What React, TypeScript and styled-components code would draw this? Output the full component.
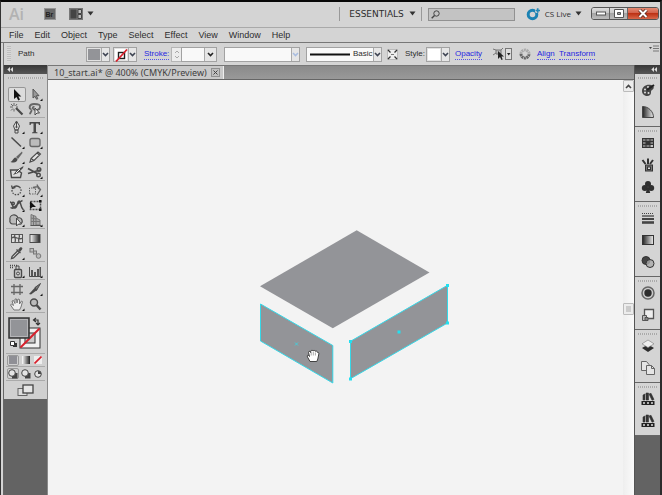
import React from "react";
import styled, { createGlobalStyle } from "styled-components";

const Global = createGlobalStyle`
  * { box-sizing: border-box; }
  body { margin: 0; background: #d4d4d4; }
  button, input, select { font: inherit; color: inherit; margin: 0; padding: 0; }
  svg { display: block; flex: none; }
`;

const Frame = styled.div`
  min-height: 100vh;
  display: flex;
  flex-direction: column;
  overflow: hidden;
  background: #d4d4d4;
  border-top: 2px solid #080808;
  border-left: 1px solid #333;
  border-right: 2px solid #2c2c2c;
  color: #2d2d2d;
  font: 9px/12px "DejaVu Sans", Verdana, sans-serif;
`;

const TitleBar = styled.header`
  display: flex;
  align-items: center;
  height: 26px;
  padding: 0 1px 2px 8px;
  border-bottom: 1px solid #a9a9a9;
`;
const Brand = styled.span`
  width: 35px;
  color: #b2b2b2;
  font: 600 16px/20px "Open Sans", sans-serif;
`;
const Spacer = styled.div`flex: 1;`;
const PlainButton = styled.button<{ $gap?: number }>`
  display: flex;
  align-items: center;
  gap: 4px;
  margin-right: ${(p) => p.$gap ?? 0}px;
  border: 0;
  background: none;
  white-space: nowrap;
`;
const Workspace = styled(PlainButton)`
  height: 14px;
  gap: 5px;
  padding: 0 5px 0 9px;
  border-left: 1px solid #999;
  border-right: 1px solid #999;
  font: 9px/12px "DejaVu Sans", sans-serif;
`;
const SearchBox = styled.label`
  display: flex;
  align-items: center;
  width: 87px;
  height: 13px;
  margin: 2px 11px 0 6px;
  padding-left: 2px;
  border: 1px solid #919191;
  background: #c3c3c3;
`;
const SearchInput = styled.input`
  flex: 1;
  min-width: 0;
  height: 10px;
  border: 0;
  outline: 0;
  background: none;
`;
const Live = styled(PlainButton)`
  font: 8px/12px "Open Sans", sans-serif;
`;
const WindowControls = styled.div`
  display: flex;
  height: 13px;
  border: 1px solid #555;
  border-radius: 3px;
  overflow: hidden;
`;
const WindowButton = styled.button<{ $close?: boolean }>`
  display: grid;
  place-items: center;
  width: ${(p) => (p.$close ? 30 : 18)}px;
  border: 0;
  border-right: ${(p) => (p.$close ? "0" : "1px solid #666")};
  background: ${(p) =>
    p.$close
      ? "linear-gradient(#e58b73, #d2604a 45%, #bd3215 50%, #d8674a)"
      : "linear-gradient(#dcdcdc, #c8c8c8 45%, #a5a5a5 50%, #bcbcbc)"};
`;

const MenuBar = styled.nav`
  display: flex;
  gap: 11px;
  height: 15px;
  padding-left: 8px;
  border-bottom: 1px solid #777;
  font: 9px/14px "Liberation Sans", Arial, sans-serif;
`;
const MenuItem = styled.button`
  border: 0;
  background: none;
  line-height: 13px;
`;

const ControlBar = styled.section`
  display: flex;
  align-items: center;
  height: 22px;
  margin-left: 2px;
  padding-left: 3px;
  border-left: 1px solid #777;
  font: 8px/10px "Liberation Sans", Arial, sans-serif;
`;
const Grip = styled.div`
  width: 4px;
  height: 16px;
  margin-right: 7px;
  background: repeating-linear-gradient(#bdbdbd 0 1px, #d8d8d8 1px 2px);
`;
const Caption = styled.span<{ $width: number }>`
  width: ${(p) => p.$width}px;
  white-space: nowrap;
`;
const PanelLink = styled.a<{ $width: number }>`
  display: flex;
  width: ${(p) => p.$width}px;
  color: #2626e0;
  text-decoration: none;
  white-space: nowrap;
  & > span { border-bottom: 1px dotted #5555e8; }
`;
const Picker = styled.button<{ $gap: number }>`
  display: flex;
  width: 24px;
  height: 15px;
  margin-right: ${(p) => p.$gap}px;
  border: 1px solid #a2a2a2;
  background: #fff;
`;
const Chevron = styled.span<{ $wide?: boolean }>`
  display: grid;
  place-items: center;
  align-self: stretch;
  flex: none;
  width: ${(p) => (p.$wide ? 12 : 8)}px;
  border-left: 1px solid #aaa;
  background: #e6e6e6;
  pointer-events: none;
`;
const Swatch = styled.span<{ $color: string }>`
  flex: 1;
  min-width: 0;
  align-self: stretch;
  display: grid;
  place-items: center;
  border: 1px solid #e2e2e2;
  background: ${(p) => p.$color};
`;
const Combo = styled.label<{ $width: number; $gap: number }>`
  display: grid;
  grid-template-columns: 1fr auto;
  width: ${(p) => p.$width}px;
  height: 15px;
  margin-right: ${(p) => p.$gap}px;
  border: 1px solid #a2a2a2;
  background: #f9f9f9;
  & > select { grid-area: 1 / 1 / 2 / 3; }
  & > span { grid-area: 1 / 2; }
  & > svg { grid-area: 1 / 1; align-self: center; margin-left: 3px; }
`;
const Select = styled.select<{ $indent?: number }>`
  appearance: none;
  min-width: 0;
  height: 13px;
  padding-left: ${(p) => p.$indent ?? 0}px;
  border: 0;
  background: none;
`;
const Stepper = styled.span`
  display: grid;
  place-items: center;
  width: 10px;
  height: 15px;
  border: 1px solid #b5b5b5;
  border-right: 0;
  background: #ececec;
`;
const OptionsButton = styled.button`
  align-self: flex-start;
  margin: 2px 1px 0 0;
  border: 0;
  background: none;
`;

const Body = styled.main`
  flex: 1;
  display: flex;
  margin-left: 2px;
  border-left: 1px solid #666;
`;
const SidePanel = styled.aside<{ $width: number }>`
  flex: none;
  width: ${(p) => p.$width}px;
  background: #636363;
`;
const PanelHeader = styled.button<{ $end?: boolean }>`
  display: flex;
  align-items: center;
  justify-content: ${(p) => (p.$end ? "flex-end" : "flex-start")};
  width: 100%;
  height: 9px;
  padding: 0 3px;
  border: 0;
  background: linear-gradient(#383838, #555);
`;
const ToolPanel = styled.div`
  padding: 3px 2px 3px;
  background: #d0d0d0;
`;
const Dots = styled.div`
  height: 2px;
  margin: 0 2px;
  background: repeating-linear-gradient(90deg, #aaa 0 1px, #d8d8d8 1px 2px);
`;
const ToolGroup = styled.div<{ $first?: boolean }>`
  display: grid;
  grid-template-columns: 18px 18px;
  justify-content: center;
  padding-top: 2px;
  margin-top: ${(p) => (p.$first ? 6 : 0)}px;
  border-bottom: 1px solid #aaa;
`;
const ToolButton = styled.button<{ $active?: boolean }>`
  width: 18px;
  height: 15px;
  border: 0;
  border-radius: 2px;
  box-shadow: ${(p) => (p.$active ? "inset 0 0 0 1px #969696" : "none")};
  background: ${(p) => (p.$active ? "#dcdcdc" : "none")};
`;
const ColorWell = styled.div`
  padding: 4px 2px 4px;
  border-bottom: 1px solid #aaa;
`;
const ModeRow = styled.div<{ $tall?: boolean }>`
  display: flex;
  justify-content: space-between;
  align-items: center;
  height: ${(p) => (p.$tall ? 14 : 13)}px;
  padding: 0 1px;
  border-bottom: 1px solid #aaa;
`;
const ModeButton = styled.button<{ $active?: boolean }>`
  display: grid;
  place-items: center;
  width: 12px;
  height: 11px;
  border: ${(p) => (p.$active ? "1px solid #999" : "0")};
  border-radius: 2px;
  background: none;
`;
const ScreenMode = styled.button`
  display: flex;
  justify-content: center;
  width: 100%;
  height: 15px;
  padding-top: 3px;
  border: 0;
  background: none;
`;

const Document = styled.section`
  flex: 1;
  min-width: 0;
  display: flex;
  flex-direction: column;
  border-left: 1px solid #8a8a8a;
`;
const TabStrip = styled.div`
  display: flex;
  height: 15px;
  background: linear-gradient(#8a8a8a, #999);
  border-top: 1px solid #777;
  border-bottom: 1px solid #666;
`;
const Tab = styled.div`
  display: flex;
  align-items: center;
  gap: 4px;
  padding: 0 3px 0 6px;
  background: #c9c9c9;
  border-right: 1px solid #eee;
  color: #404040;
  font: 9px/12px "Noto Sans", "Open Sans", sans-serif;
  white-space: nowrap;
`;
const CloseTab = styled.button`
  display: grid;
  place-items: center;
  width: 9px;
  height: 9px;
  border: 1px solid #909090;
  background: #c0c0c0;
`;
const Viewport = styled.div`
  flex: 1;
  display: flex;
`;
const Canvas = styled.div`
  position: relative;
  flex: 1;
  overflow: hidden;
  background: #f3f3f3;
`;
const Artwork = styled.svg`
  position: absolute;
  left: 208px;
  top: 146px;
`;
const ScrollTrack = styled.div`
  display: flex;
  flex-direction: column;
  align-items: center;
  width: 11px;
  background: linear-gradient(90deg, #eeeeee, #fafafa);
`;
const ScrollButton = styled.button`
  display: grid;
  place-items: center;
  width: 11px;
  height: 12px;
  border: 1px solid #bbb;
  border-radius: 1px;
  background: #ececec;
`;
const TrackSpan = styled.div<{ $share: number }>`flex: ${(p) => p.$share};`;

const DockGroup = styled.div`
  padding: 3px 1px 3px;
  border-bottom: 1px solid #666;
  background: #d4d4d4;
`;
const DockButton = styled.button`
  display: grid;
  place-items: center;
  width: 100%;
  height: 22px;
  border: 0;
  background: none;
`;
const Dock = styled(SidePanel)`
  border-left: 1px solid #555;
`;

const Caret = () => (
  <svg width="7" height="5" viewBox="0 0 7 5"><path d="M.5 .5h6L3.5 4.5z" fill="#333" /></svg>
);
const Vee = ({ color = "#3d4352" }: { color?: string }) => (
  <svg width="7" height="5" viewBox="0 0 7 5"><path d="M1 1l2.5 2.5L6 1" fill="none" stroke={color} strokeWidth="1.6" /></svg>
);
const Collapse = () => (
  <svg width="6" height="5" viewBox="0 0 6 5"><path d="M3 0L.3 2.5 3 5zM6 0L3.3 2.5 6 5z" fill="#ddd" /></svg>
);
const NoneSlash = () => (
  <svg width="13" height="13" viewBox="0 0 13 13">
    <rect x="3.5" y="3.5" width="6" height="6" fill="none" stroke="#222" strokeWidth="1.4" />
    <path d="M1 12.5L12 .5" stroke="#d8202c" strokeWidth="1.7" />
  </svg>
);

const K = "#4a4a4a";
const corner = <path d="M16.5 11.5v2.5h-2.5z" fill="#111" />;
type Tool = { name: string; art: React.ReactNode; more?: boolean; active?: boolean };

const toolGroups: Tool[][] = [
  [
    { name: "Selection", active: true, art: <path d="M6 2v10l2.5-2 1.8 3.4 1.7-.8-1.7-3.2h3z" fill="#111" /> },
    { name: "Direct Selection", more: true, art: <path d="M7 2v9l2-1.7 1.6 3 1.2-.6-1.5-3H13z" fill="#999" stroke="#555" /> },
    { name: "Magic Wand", art: <g stroke={K} fill="none"><path d="M8 6l6.500 6.500" strokeWidth="2.200" /><path d="M6 1v3M2 5h3M3 2l2 2M9 2L7.500 4M3 8.500l2-2M6 7v2.500M8 5h2" stroke="#666" /></g> },
    { name: "Lasso", art: <g fill="none" stroke={K}><path d="M5.500 7.500C2.500 6.500 3 2 8 2s6.500 1 6 3.500-4 3-6 2-1.500-3 .5-2.500M6 8c-1 1-1 3-2.500 4" stroke="#666" strokeWidth="1.800" /><path d="M9 6v7l2-2h2.500z" fill="#eee" /></g> },
  ],
  [
    { name: "Pen", more: true, art: <g fill="#ddd" stroke={K}><path d="M8.500 1L5.500 6l1.500 4h3l1.500-4zM7 10h3v3H7z" /><path d="M8.500 2v5" /><circle cx="8.500" cy="7" r=".7" fill={K} /></g> },
    { name: "Type", more: true, art: <path d="M3.500 2h10.500v3h-1l-.7-1.500H10V12l1.500.5v.8H6v-.8l1.500-.5V3.500H5.300L4.500 5h-1z" fill={K} /> },
    { name: "Line Segment", more: true, art: <path d="M3.500 2.500l9.500 9" stroke={K} strokeWidth="1.500" /> },
    { name: "Rounded Rectangle", more: true, art: <rect x="4" y="3.500" width="10" height="8" rx="2" fill="#bcbcbc" stroke="#666" strokeWidth="1.300" /> },
    { name: "Paintbrush", more: true, art: <g fill={K}><path d="M14 1.500L8 7l2 2 4.500-6z" fill="#666" /><path d="M7.500 7.500C5 8 5 11 2.500 12c4 1.500 7 0 7-3z" /></g> },
    { name: "Pencil", more: true, art: <path d="M4 12l1-3.500L12 2l2.500 2L8 10.500zM5 8.500L8 10.500M11 3l2.500 2" fill="#e5e5e5" stroke={K} strokeWidth="1.100" /> },
    { name: "Blob Brush", art: <g><path d="M2.500 5h7l4 3-1 4.500h-9z" fill="#ddd" stroke={K} strokeWidth="1.400" /><path d="M15.500 1L9 5 5 10l5-2 5-5z" fill={K} /><path d="M8 8l4-4" stroke="#eee" /></g> },
    { name: "Scissors", more: true, art: <g fill="none" stroke={K} strokeWidth="1.800"><path d="M2 3.500l10 5.500M2 8.500l12-3.500" /><circle cx="13" cy="4.500" r="1.800" strokeWidth="1.400" /><circle cx="12.500" cy="10" r="1.800" strokeWidth="1.400" /></g> },
  ],
  [
    { name: "Rotate", more: true, art: <g fill="none" stroke={K}><path d="M5 4.500a4.500 4.500 0 1 0 7 0" strokeDasharray="1.500 1.200" strokeWidth="1.300" /><path d="M5 4.500C7 2.500 10 2.500 12 4.500M3.500 2.500l1 3 3-1" strokeWidth="1.300" /></g> },
    { name: "Scale", more: true, art: <g fill="none" stroke="#666"><path d="M3.500 11V5h6v6z" strokeDasharray="1.500 1" /><path d="M7 4.500l5-1 2.500 3-3.500 5.500M11 1.500l1.500 4 2 1" strokeWidth="1.300" /></g> },
    { name: "Warp", more: true, art: <g fill="none" stroke={K} strokeWidth="1.500"><path d="M2 4c3 0 2 7 5 6s2-7 4-7 1 6 4.500 9M2.500 9.500c4 3 7-5.500 12-7" /><circle cx="5" cy="5.500" r="1.300" /></g> },
    { name: "Free Transform", art: <g><rect x="4.500" y="3.500" width="10" height="8" fill="none" stroke={K} strokeDasharray="2 1" strokeWidth="1.500" /><path d="M4 3v8l2.500-2H10zM13 2h2.500v2.500H13zM13 10.500h2.500V13H13z" fill="#111" /></g> },
    { name: "Shape Builder", more: true, art: <g stroke={K}><path d="M2 7a4 4 0 0 1 8-2 3 3 0 0 1 2 6H5a3 3 0 0 1-3-4z" fill="#bbb" strokeWidth="1.200" /><path d="M8.500 5v8l2-2h3z" fill="#eee" /></g> },
    { name: "Perspective Grid", more: true, art: <g fill="#aaa" stroke="#777"><path d="M5 1.500l5 2v9H5zM10 5l4 2v5h-4M5 5l5 1M5 8.500h9M7.500 2.500v10" /><path d="M4.500 12.500H15" stroke="#555" /></g> },
  ],
  [
    { name: "Mesh", art: <g fill="#ddd" stroke="#555"><rect x="3.500" y="3.500" width="11" height="8" /><path d="M3.500 7c4-3 7 3 11 0M7 3.500c-2 3 2 4 0 8M11 3.500c2 3-2 4 0 8" fill="none" strokeWidth="1.300" /></g> },
    { name: "Gradient", art: <rect x="4" y="3.500" width="10" height="8" fill="url(#fade)" stroke={K} /> },
    { name: "Eyedropper", more: true, art: <g fill={K}><path d="M10 4l2-2.500c2-1 3 1 2 2L12 6z" /><path d="M8.500 3.500l4 3.500M9.500 5L4 10.500l-.5 2 2-.5L11 6.500" fill="#ddd" stroke={K} strokeWidth="1.300" /></g> },
    { name: "Blend", art: <g fill="#bbb" stroke="#777"><rect x="4" y="2.500" width="3.500" height="3.500" /><rect x="7.500" y="5" width="3" height="3" /><circle cx="12.500" cy="10" r="2.300" /></g> },
  ],
  [
    { name: "Symbol Sprayer", more: true, art: <g fill="none" stroke={K}><path d="M2 1.500h7M2 3.500h4" strokeDasharray="1 1" strokeWidth="1.500" /><rect x="6.500" y="5.500" width="7" height="8" rx="1" fill="#ccc" strokeWidth="1.400" /><path d="M8 5V2h3v3" /><circle cx="10" cy="9.500" r="1.500" /></g> },
    { name: "Column Graph", more: true, art: <g><path d="M3.500 3v9.500h11.500" fill="none" stroke={K} /><path d="M5 6h2v6H5zM8 8h2v4H8zM11 5h2v7h-2zM13.500 3h1.500v9h-1.500z" fill="#555" /></g> },
  ],
  [
    { name: "Artboard", art: <path d="M6 2v11M12 2v11M3 4.500h12M3 10.500h12" stroke="#666" strokeWidth="1.300" /> },
    { name: "Slice", more: true, art: <g fill={K}><path d="M14.500 1.500L9 5.500l1.500 3z" fill="#777" stroke={K} /><path d="M9.500 5L3 12l2 .5L11 8z" /></g> },
    { name: "Hand", more: true, art: <path d="M6 13l-3.500-5 1-1L5.500 8.500 4 4l1.500-.5L7 6.500 7 2h1.500L9 6l1-4 1.500.5L11.500 7 13.500 4l1 .6L13 10l-1.500 3z" fill="#eee" stroke="#777" /> },
    { name: "Zoom", art: <g fill="none" stroke={K}><circle cx="8" cy="5.500" r="3.500" fill="#bbb" strokeWidth="1.400" /><path d="M10.500 8l4 4.500" strokeWidth="2.500" /></g> },
  ],
];

const dockGroups: { name: string; art: React.ReactNode }[][] = [
  [
    { name: "Color", art: <g><path d="M2 9c0-4 4-7 9-6 4 1 3 4 1 5s0 3-2 5-8 1-8-4z" fill="#444" /><g fill="#ddd"><circle cx="5" cy="7.500" r="1" /><circle cx="8" cy="5" r="1" /><circle cx="5" cy="10.500" r="1" /><circle cx="8.500" cy="11" r="1" /></g><path d="M7 8l7-5" stroke="#222" strokeWidth="2" /></g> },
    { name: "Color Guide", art: <path d="M2.500 2.500c6 0 11 5 11 11h-11z" fill="url(#fadeback)" stroke="#444" /> },
  ],
  [
    { name: "Swatches", art: <g><rect x="2" y="3" width="12" height="10" fill="#333" /><path d="M3 5h2.500M3 8h2.500M3 11h2.500M6.500 5h3M10.500 5H13M10.500 8H13M6.500 11h3" stroke="#999" strokeWidth="1.600" /><path d="M10.500 11H13" stroke="#eee" strokeWidth="1.600" /></g> },
    { name: "Brushes", art: <g fill="#ddd" stroke="#333"><path d="M5.500 7L2.500 3M8 7V1.500M10 7l3-4" strokeWidth="2" /><rect x="5.500" y="8" width="7" height="6" fill="#777" /><rect x="7.500" y="10" width="3" height="2.500" /></g> },
    { name: "Symbols", art: <g fill="#2f2f2f"><circle cx="8" cy="5" r="3" /><circle cx="4.800" cy="9" r="3" /><circle cx="11.200" cy="9" r="3" /><path d="M7.300 8h1.400l1.500 6H5.800z" /></g> },
  ],
  [
    { name: "Stroke", art: <g stroke="#444"><path d="M2 3.500h12" strokeDasharray="1 1" /><path d="M2 6h12" strokeWidth="1.300" /><path d="M2 9h12" strokeWidth="2" /><path d="M2 12.500h12" strokeWidth="2.600" /></g> },
    { name: "Gradient", art: <rect x="2.500" y="3.500" width="11" height="9" fill="url(#fadeback)" stroke="#333" /> },
    { name: "Transparency", art: <g stroke="#333"><circle cx="6" cy="6.500" r="4" fill="#444" /><circle cx="10" cy="9.500" r="4" fill="#aaa" fillOpacity=".8" /></g> },
  ],
  [
    { name: "Appearance", art: <g><circle cx="8" cy="8" r="6" fill="#ccc" stroke="#666" strokeWidth="1.500" /><circle cx="8" cy="8" r="3.700" fill="#2c2c2c" /></g> },
    { name: "Graphic Styles", art: <g fill="#eee" stroke="#555"><path d="M4.500 2.500h9v9h-9z" strokeWidth="1.300" /><path d="M2.500 8.500h4v5h-4z" fill="#bbb" /><path d="M5 10.500h3v3H5z" fill="#888" /></g> },
  ],
  [
    { name: "Layers", art: <g><path d="M8 6.500l6 3.500-6 4-6-4z" fill="#2d2d2d" /><path d="M8 2l6 3.800-6 3.800-6-3.800z" fill="#eee" stroke="#888" strokeWidth=".7" /></g> },
    { name: "Artboards", art: <g fill="#e5e5e5" stroke="#666"><path d="M1.500 1.500h5l2.500 3v6H1.500z" /><path d="M6.500 5.500h5l3 3v6h-8z" /><path d="M11.500 5.500v3h3" fill="none" /></g> },
  ],
  [0, 1].map((n) => ({
    name: `Library ${n + 1}`,
    art: <g><path d="M3 9V4l2-1V9zM6 9V2h2.500v7zM9 3l2-.7 3 6.200-2 .7z" fill="#333" stroke="#333" strokeWidth=".6" /><path d="M5.500 4v5" stroke="#999" /><rect x="1.500" y="10" width="13" height="4" fill="#222" /><path d="M3 12h2M7 12h2M11 12h2" stroke="#ddd" strokeWidth="1.500" /></g>,
  })),
];

const menus = ["File", "Edit", "Object", "Type", "Select", "Effect", "View", "Window", "Help"];

export default function App() {
  return (
    <Frame>
      <Global />
      <TitleBar>
        <Brand>Ai</Brand>
        <PlainButton $gap={13} aria-label="Bridge">
          <svg width="12" height="12" viewBox="0 0 12 12">
            <rect x=".5" y=".5" width="11" height="11" fill="#686868" stroke="#969696" />
            <text x="1.500" y="9" fontSize="7" fontWeight="700" fill="#222" fontFamily="Liberation Sans">Br</text>
          </svg>
        </PlainButton>
        <PlainButton aria-label="Arrange Documents">
          <svg width="14" height="12" viewBox="0 0 14 12">
            <rect width="14" height="12" fill="#777" />
            <path d="M1.500 1.500h6v9h-6z" fill="#444" /><path d="M9 1.500h3.500v4H9zM9 6.500h3.500v4H9z" fill="#bbb" stroke="#444" />
          </svg>
          <Caret />
        </PlainButton>
        <Spacer />
        <Workspace>ESSENTIALS <Caret /></Workspace>
        <SearchBox aria-label="Search">
          <svg width="9" height="9" viewBox="0 0 9 9"><circle cx="5.500" cy="3.500" r="2.700" fill="none" stroke="#444" /><path d="M3.500 5.500L.7 8.300" stroke="#444" strokeWidth="1.400" /></svg>
          <SearchInput type="search" />
        </SearchBox>
        <Live $gap={9}>
          <svg width="15" height="14" viewBox="0 0 15 14">
            <circle cx="6.500" cy="7.500" r="4.300" fill="none" stroke="#1b82b3" strokeWidth="3" />
            <path d="M9 3.500h5M11.500 1v5" stroke="#d4d4d4" strokeWidth="3.500" /><path d="M9.500 3.500h4.500M11.700 1.200v4.500" stroke="#2387b5" strokeWidth="1.700" />
          </svg>
          CS Live <Caret />
        </Live>
        <WindowControls>
          <WindowButton aria-label="Minimize"><svg width="10" height="5" viewBox="0 0 10 5"><rect x=".5" y="1" width="9" height="3" fill="#fff" stroke="#555" /></svg></WindowButton>
          <WindowButton aria-label="Maximize"><svg width="10" height="9" viewBox="0 0 10 9"><path d="M.5 .5h9v8h-9zM3.500 3.500h3v2h-3z" fill="#fff" fillRule="evenodd" stroke="#555" /></svg></WindowButton>
          <WindowButton $close aria-label="Close"><svg width="10" height="9" viewBox="0 0 10 9"><path d="M1.500 1l7 7M8.500 1l-7 7" stroke="#59291f" strokeWidth="3.600" /><path d="M1.500 1l7 7M8.500 1l-7 7" stroke="#fff" strokeWidth="2" /></svg></WindowButton>
        </WindowControls>
      </TitleBar>

      <MenuBar>{menus.map((m) => <MenuItem key={m}>{m}</MenuItem>)}</MenuBar>

      <ControlBar>
        <Grip />
        <Caption $width={68}>Path</Caption>
        <Picker $gap={3} aria-label="Fill"><Swatch $color="#939498" /><Chevron><Vee /></Chevron></Picker>
        <Picker $gap={7} aria-label="Stroke color"><Swatch $color="#fff"><NoneSlash /></Swatch><Chevron><Vee /></Chevron></Picker>
        <PanelLink href="#stroke" $width={27}><span>Stroke:</span></PanelLink>
        <Stepper>
          <svg width="6" height="9" viewBox="0 0 6 9"><path d="M1 3l2-2 2 2M1 6l2 2 2-2" fill="none" stroke="#aaa" /></svg>
        </Stepper>
        <Combo $width={36} $gap={7}>
          <Select aria-label="Stroke weight" defaultValue=""><option value="" /><option>1 pt</option></Select>
          <Chevron $wide><Vee color="#222" /></Chevron>
        </Combo>
        <Combo $width={76} $gap={6}>
          <Select aria-label="Width profile" defaultValue="" disabled><option value="" /></Select>
          <Chevron><Vee color="#a9bde0" /></Chevron>
        </Combo>
        <Combo $width={76} $gap={5}>
          <svg width="41" height="3" viewBox="0 0 41 3"><path d="M0 1.500h40" stroke="#111" strokeWidth="2" /></svg>
          <Select $indent={46} aria-label="Brush definition"><option>Basic</option></Select>
          <Chevron><Vee /></Chevron>
        </Combo>
        <PlainButton $gap={7} aria-label="Recolor">
          <svg width="11" height="11" viewBox="0 0 11 11"><rect x=".5" y=".5" width="10" height="10" fill="#eee" stroke="#bbb" /><path d="M1 1l2.500 2.500M10 1L7.500 3.500M1 10l2.500-2.500M10 10L7.500 7.500" stroke="#333" strokeWidth="1.300" /><path d="M4 5h3v1H4z" fill="#777" /></svg>
        </PlainButton>
        <Caption $width={21}>Style:</Caption>
        <Picker $gap={5} aria-label="Style"><Swatch $color="#fff" /><Chevron><Vee /></Chevron></Picker>
        <PanelLink href="#opacity" $width={37}><span>Opacity</span></PanelLink>
        <PlainButton $gap={7} aria-label="Select Similar">
          <svg width="20" height="14" viewBox="0 0 20 14">
            <path d="M1 2l3 1M1 8l3-2M4 3h5v4H4zM9 3l2-2" fill="#bbb" stroke="#777" />
            <path d="M6 4v8l2-2 1.500 3 1.200-.6L9.500 9.500H12z" fill="#222" />
            <rect x="13.500" y="1.500" width="6" height="11" fill="#ddd" stroke="#777" /><path d="M15 6h3.500L16.700 8.500z" fill="#222" />
          </svg>
        </PlainButton>
        <PlainButton $gap={6} aria-label="Recolor Artwork">
          <svg width="12" height="12" viewBox="0 0 12 12"><circle cx="6" cy="6" r="4" fill="none" stroke="#ddd" strokeWidth="3" /><path d="M2 6a4 4 0 0 0 8 0" fill="none" stroke="#666" strokeWidth="3" strokeDasharray="2 .5" /><path d="M2 6a4 4 0 0 1 8 0" fill="none" stroke="#aaa" strokeWidth="3" strokeDasharray="2 .5" /></svg>
        </PlainButton>
        <PanelLink href="#align" $width={22}><span>Align</span></PanelLink>
        <PanelLink href="#transform" $width={36}><span>Transform</span></PanelLink>
        <Spacer />
        <OptionsButton aria-label="Panel options">
          <svg width="10" height="7" viewBox="0 0 10 7"><path d="M0 2h3L1.500 4z" fill="#444" /><path d="M4 1h6M4 3.500h6M4 6h6" stroke="#777" /></svg>
        </OptionsButton>
      </ControlBar>

      <Body>
        <svg width="0" height="0">
          <defs>
            <linearGradient id="fade"><stop stopColor="#fff" /><stop offset="1" stopColor="#222" /></linearGradient>
            <linearGradient id="fadeback"><stop stopColor="#222" /><stop offset="1" stopColor="#eee" /></linearGradient>
          </defs>
        </svg>
        <SidePanel $width={43}>
          <PanelHeader aria-label="Collapse tools"><Collapse /></PanelHeader>
          <ToolPanel>
            <Dots />
            {toolGroups.map((g, i) => (
              <ToolGroup key={i} $first={i === 0}>
                {g.map((t) => (
                  <ToolButton key={t.name} $active={t.active} aria-label={t.name}>
                    <svg width="18" height="15" viewBox="0 0 18 15">{t.art}{t.more && corner}</svg>
                  </ToolButton>
                ))}
              </ToolGroup>
            ))}
            <ColorWell>
              <svg width="34" height="32" viewBox="0 0 34 32" role="img" aria-label="Fill and stroke">
                <rect x="12" y="11" width="20" height="20" fill="#f1f1f1" stroke="#333" />
                <rect x="17" y="16" width="10" height="10" fill="#ccc" stroke="#333" />
                <path d="M12.500 30.500l19-19" stroke="#d8202c" strokeWidth="2" />
                <rect x="1" y="1" width="20" height="20" fill="#939498" stroke="#333" strokeWidth="1.500" />
                <rect x="2.500" y="2.500" width="17" height="17" fill="none" stroke="#b5b5b8" />
                <path d="M26 3h4v4M28 1l-2.500 2L28 5M28 6l2 2 2-2" fill="none" stroke="#333" strokeWidth="1.200" />
                <path d="M5 26h4v4H5z" fill="#333" /><path d="M2.500 24.500h4v4h-4z" fill="#fff" stroke="#333" />
              </svg>
            </ColorWell>
            <ModeRow>
              <ModeButton $active aria-label="Color"><svg width="8" height="8"><rect width="8" height="8" fill="#8f8f95" /></svg></ModeButton>
              <ModeButton aria-label="Gradient"><svg width="8" height="8"><rect width="8" height="8" fill="url(#fade)" /></svg></ModeButton>
              <ModeButton aria-label="None"><svg width="8" height="8"><rect width="8" height="8" fill="#eee" /><path d="M.5 7.500l7-7" stroke="#d8202c" strokeWidth="1.700" /></svg></ModeButton>
            </ModeRow>
            <ModeRow $tall>
              {["Draw Normal", "Draw Behind", "Draw Inside"].map((n, i) => (
                <ModeButton key={n} $active={i === 0} aria-label={n}>
                  <svg width="10" height="10" viewBox="0 0 10 10">
                    {i < 2 && <path d="M4 4h5.500v5.500H4z" fill="#444" />}
                    <circle cx={i < 2 ? 4 : 5} cy={i < 2 ? 4 : 5} r="3.300" fill="#e4e4e4" stroke="#444" />
                    {i === 2 && <path d="M5 5h3a3 3 0 0 1-3 3z" fill="#444" transform="rotate(-90 5 5)" />}
                  </svg>
                </ModeButton>
              ))}
            </ModeRow>
            <ScreenMode aria-label="Screen mode">
              <svg width="17" height="13" viewBox="0 0 17 13"><rect x="1" y="4.500" width="9" height="7" fill="#ddd" stroke="#666" /><rect x="6" y="1" width="10" height="8" fill="#e6e6e6" stroke="#444" strokeWidth="1.300" /></svg>
            </ScreenMode>
          </ToolPanel>
        </SidePanel>

        <Document>
          <TabStrip>
            <Tab>
              10_start.ai* @ 400% (CMYK/Preview)
              <CloseTab aria-label="Close document"><svg width="5" height="5" viewBox="0 0 5 5"><path d="M.5 .5l4 4M4.500 .5l-4 4" stroke="#444" /></svg></CloseTab>
            </Tab>
          </TabStrip>
          <Viewport>
            <Canvas>
              <Artwork width="196" height="162" viewBox="256 226 196 162">
                <g fill="#939498">
                  <path d="M356.700 230.300L429.500 272.500 332.800 328.300 260 286.300z" />
                  <g stroke="#35d8e8">
                    <path d="M260.500 304l72.300 41.500V383l-72.300-42z" />
                    <path d="M350.500 341.300l97-56V323l-97 55.700z" />
                  </g>
                </g>
                <path d="M349 340h3v3h-3zM446 284h3v3h-3zM446 321.500h3v3h-3zM349 377.500h3v3h-3zM397.500 330.500h3v3h-3z" fill="#22e0f0" />
                <path d="M295 342.500l3 3M298 342.500l-3 3" stroke="#35d8e8" strokeWidth=".8" />
                <path d="M310 361.500l-2.500-4.500c-1-2 1-2.500 2-.5l-1-4c0-1.500 1.500-1.500 2 0l.3-1.500c.5-1 2-1 2.200 0 .5-1 2-.8 2.200.3 1-.6 2 0 2.100 1 1.200-.3 1.700.6 1.500 1.700l-1 5-1 2.500z" fill="#fff" stroke="#333" strokeWidth=".9" />
                <path d="M311.200 352v3.500M313.300 351.500v4M315.400 352.500v3" stroke="#555" strokeWidth=".5" />
              </Artwork>
            </Canvas>
            <ScrollTrack>
              <ScrollButton aria-label="Scroll up"><svg width="7" height="5" viewBox="0 0 7 5"><path d="M1 4l2.500-2.500L6 4" fill="none" stroke="#444" strokeWidth="1.600" /></svg></ScrollButton>
              <TrackSpan $share={54} />
              <ScrollButton aria-label="Scroll thumb"><svg width="5" height="7" viewBox="0 0 5 7"><path d="M0 1h5M0 3h5M0 5h5" stroke="#aaa" /></svg></ScrollButton>
              <TrackSpan $share={46} />
            </ScrollTrack>
          </Viewport>
        </Document>

        <Dock $width={26}>
          <PanelHeader $end aria-label="Expand panels"><Collapse /></PanelHeader>
          {dockGroups.map((g, i) => (
            <DockGroup key={i}>
              <Dots />
              {g.map((t) => (
                <DockButton key={t.name} aria-label={t.name}><svg width="16" height="16" viewBox="0 0 16 16">{t.art}</svg></DockButton>
              ))}
            </DockGroup>
          ))}
        </Dock>
      </Body>
    </Frame>
  );
}
